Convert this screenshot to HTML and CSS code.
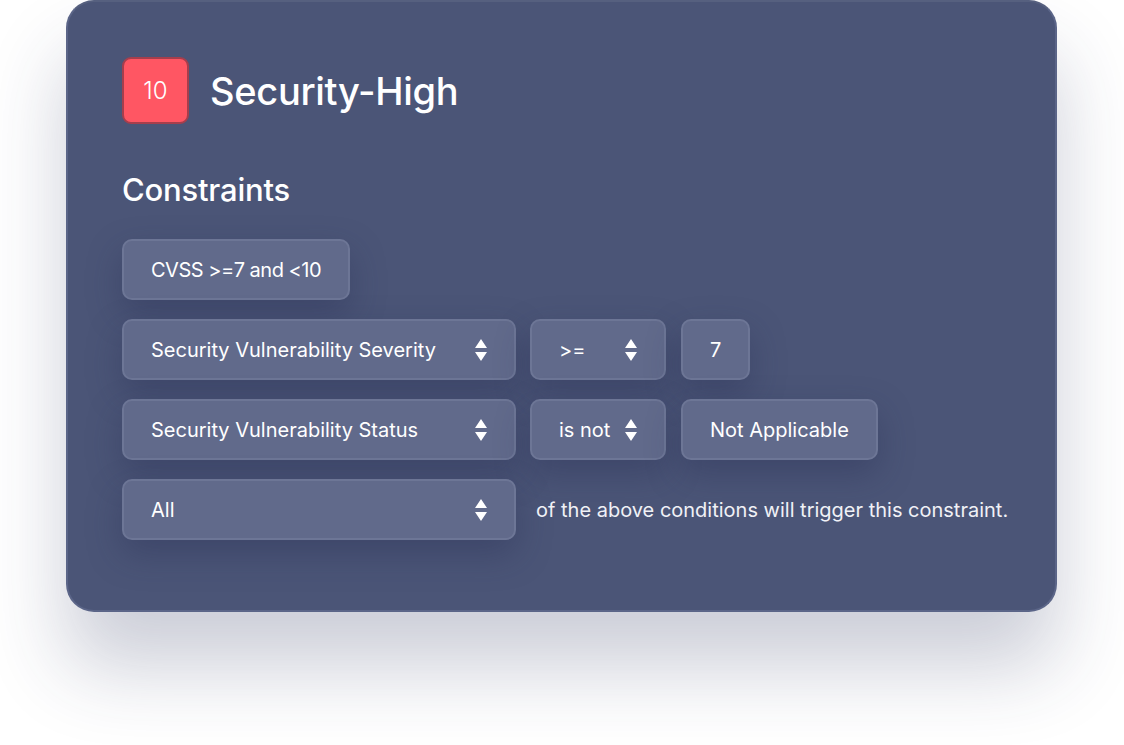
FILE: index.html
```html
<!DOCTYPE html>
<html lang="en">
<head>
    <meta charset="UTF-8">
    <title>Security-High</title>
    <link rel="stylesheet" href="styles.css">
</head>
<body>
    <div class="card">
        <header class="head">
            <div class="badge">10</div>
            <h1>Security-High</h1>
        </header>

        <h2>Constraints</h2>

        <div class="rows">
            <div class="row">
                <div class="chip rule">CVSS &gt;=7 and &lt;10</div>
            </div>
            <div class="row">
                <div class="chip select wide">
                    <span>Security Vulnerability Severity</span>
                    <svg class="arrows" width="12" height="22" viewBox="0 0 12 22"><path d="M6 0 L12 9 L0 9 Z M0 13 L12 13 L6 22 Z" fill="#fff"/></svg>
                </div>
                <div class="chip select op">
                    <span>&gt;=</span>
                    <svg class="arrows" width="12" height="22" viewBox="0 0 12 22"><path d="M6 0 L12 9 L0 9 Z M0 13 L12 13 L6 22 Z" fill="#fff"/></svg>
                </div>
                <div class="chip">7</div>
            </div>
            <div class="row">
                <div class="chip select wide">
                    <span>Security Vulnerability Status</span>
                    <svg class="arrows" width="12" height="22" viewBox="0 0 12 22"><path d="M6 0 L12 9 L0 9 Z M0 13 L12 13 L6 22 Z" fill="#fff"/></svg>
                </div>
                <div class="chip select op">
                    <span>is not</span>
                    <svg class="arrows" width="12" height="22" viewBox="0 0 12 22"><path d="M6 0 L12 9 L0 9 Z M0 13 L12 13 L6 22 Z" fill="#fff"/></svg>
                </div>
                <div class="chip">Not Applicable</div>
            </div>
            <div class="row">
                <div class="chip select wide">
                    <span>All</span>
                    <svg class="arrows" width="12" height="22" viewBox="0 0 12 22"><path d="M6 0 L12 9 L0 9 Z M0 13 L12 13 L6 22 Z" fill="#fff"/></svg>
                </div>
                <p class="note">of the above conditions will trigger this constraint.</p>
            </div>
        </div>
    </div>
</body>
</html>
```

FILE: styles.css
```css
body {
    margin: 0;
    min-height: 745px;
    background: #fff;
    font-family: 'Inter', 'Noto Sans', sans-serif;
    color: #fff;
}

.card {
    box-sizing: border-box;
    width: 991px;
    height: 612px;
    margin-left: 66px;
    padding: 55px 54px 0;
    background: #4b5577;
    border: 2px solid #5b6588;
    border-top-color: #56607f;
    border-radius: 28px;
    box-shadow: 0 55px 80px rgba(40, 50, 90, 0.24);
}

.head {
    display: flex;
    align-items: center;
    gap: 21px;
}

.badge {
    box-sizing: border-box;
    width: 67px;
    height: 67px;
    display: flex;
    align-items: center;
    justify-content: center;
    background: #ff5663;
    border: 2px solid #a63e4c;
    border-radius: 9px;
    font-size: 24px;
    font-weight: 300;
}

h1 {
    margin: 0;
    font-size: 38px;
    font-weight: 500;
    letter-spacing: -0.3px;
}

h2 {
    margin: 49px 0 0;
    font-size: 31px;
    line-height: 34px;
    font-weight: 500;
    letter-spacing: -0.2px;
}

.rows {
    margin-top: 32px;
    display: flex;
    flex-direction: column;
    gap: 19px;
}

.row {
    display: flex;
    align-items: center;
    gap: 14px;
}

.chip {
    box-sizing: border-box;
    flex-shrink: 0;
    height: 61px;
    display: flex;
    align-items: center;
    padding: 0 27px;
    background: #616a8b;
    border: 2px solid #6d7696;
    border-radius: 10px;
    font-size: 20px;
    white-space: nowrap;
    box-shadow: 0 14px 34px rgba(35, 42, 80, 0.34);
}

.rule {
    letter-spacing: -0.5px;
}

.select {
    justify-content: space-between;
}

.wide {
    width: 394px;
}

.op {
    width: 136px;
}

.row .chip + .chip:not(.select) {
    margin-left: 1px;
}

.note {
    margin: 0 0 0 6px;
    font-size: 20px;
    white-space: nowrap;
    color: #f0f1f6;
}
```
